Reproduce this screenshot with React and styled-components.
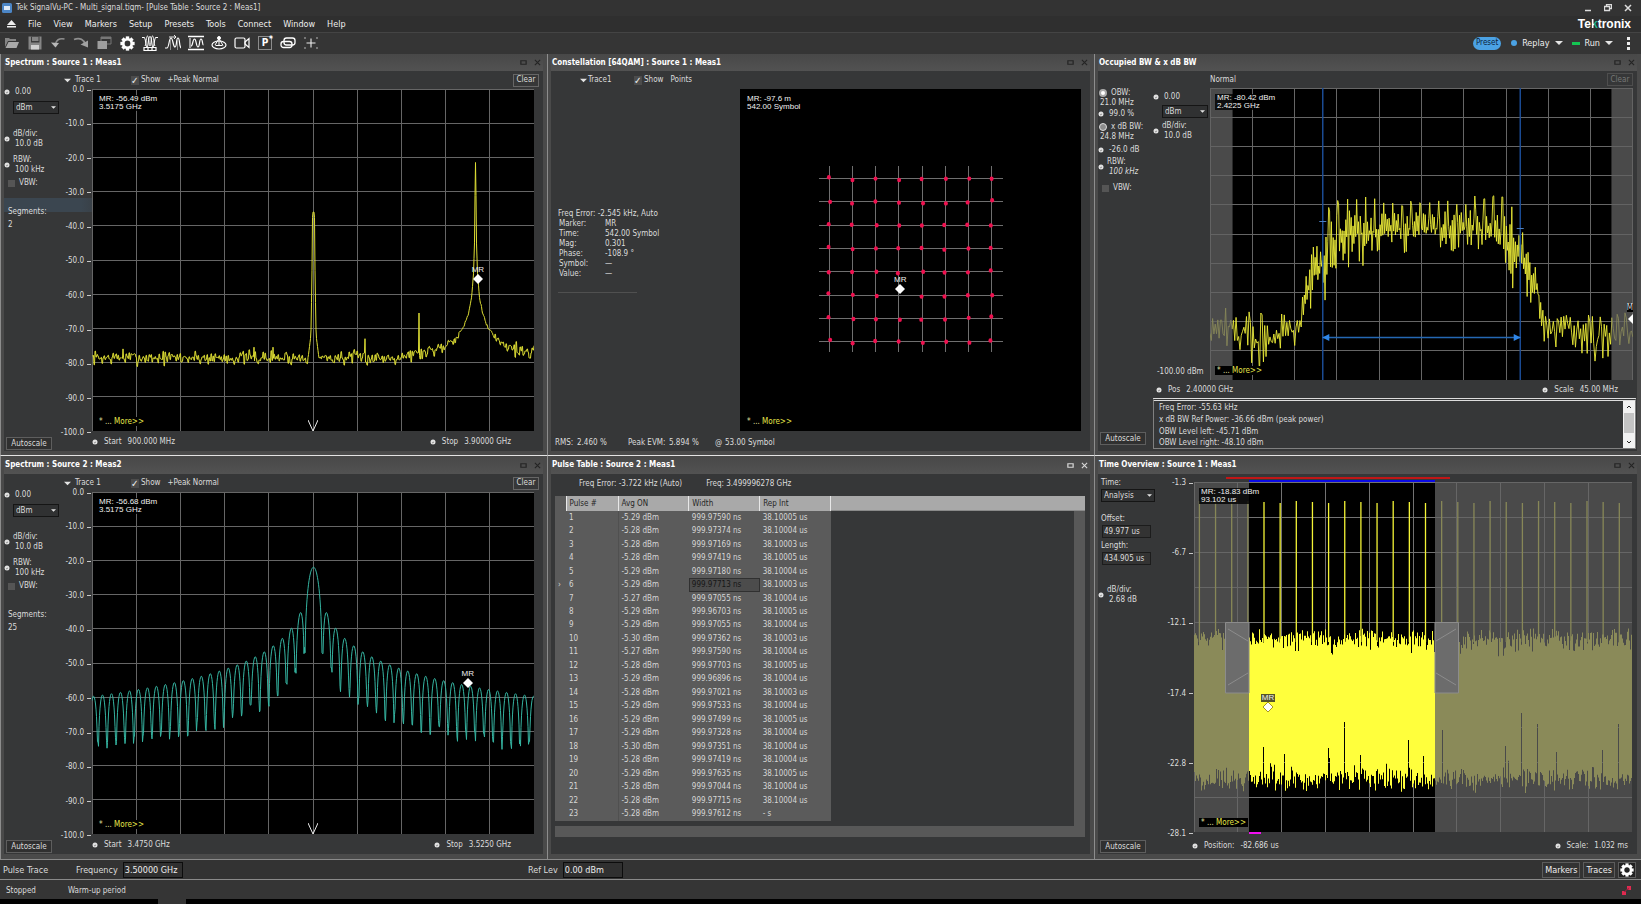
import React from 'react'
import styled, { createGlobalStyle } from 'styled-components'

const MENU = ['File', 'View', 'Markers', 'Setup', 'Presets', 'Tools', 'Connect', 'Window', 'Help']

const WIDTHS = [
    '97590', '97374', '97169', '97419', '97180', '97713', '97055', '96703', '97055', '97362', '97590', '97703',
    '96896', '97021', '97533', '97499', '97328', '97351', '97419', '97635', '97044', '97715', '97612',
]
const POWERS = [
    '29', '28', '28', '28', '29', '29', '27', '29', '29', '30', '27', '28',
    '29', '28', '29', '29', '29', '30', '28', '29', '28', '28', '28',
]
const INTERVALS = '54354345434543454445440'

const PULSES = WIDTHS.map((w, i) => ({
    id: i + 1,
    power: `-5.${POWERS[i]} dBm`,
    width: `999.${w} ns`,
    rep: i === 22 ? '- s' : `38.1000${INTERVALS[i]} us`,
}))

/* ---------- trace data ---------- */

const random = (seed) => {
    let s = seed
    return () => {
        s = (s * 1664525 + 1013904223) % 4294967296
        return s / 4294967296
    }
}

const toPath = (points) => 'M' + points.map(([x, y]) => `${x.toFixed(1)} ${y.toFixed(1)}`).join('L')

const lerp = (table, x) => {
    if (x <= table[0][0]) return table[0].slice(1)
    for (let i = 1; i < table.length; i++) {
        if (x <= table[i][0]) {
            const a = table[i - 1]
            const b = table[i]
            const t = (x - a[0]) / (b[0] - a[0])
            return a.slice(1).map((v, k) => v + (b[k + 1] - v) * t)
        }
    }
    return table[table.length - 1].slice(1)
}

const CW_SKIRT = [
    [0, -21.5], [0.6, -33], [1, -45], [2, -54], [4, -61], [7, -65.5], [12, -69.8], [19, -72.6],
    [33, -75.3], [54, -77.3], [90, -78.6],
]
const SPURS = { 162: -75.5, 181: -75.5, 273: -73, 327: -65.5, 31: -76 }

const cwTrace = () => {
    const rnd = random(7)
    const points = []
    let noise = 0
    for (let x = 0; x <= 442; x += 0.5) {
        if (x % 1 === 0) noise = (rnd() + rnd() + rnd() - 1.5) * 2
        let db = lerp(CW_SKIRT, Math.abs(x - 383.5))[0]
        db += noise * Math.min(1, Math.abs(x - 383.5) / 30)
        const d = Math.abs(x - 221.5)
        if (d <= 0.5) db = -36
        else if (d <= 1) db = -37.5
        else if (d < 6) db = Math.max(db, lerp([[1, -38], [1.6, -56], [2.6, -72], [6, -80]], d)[0])
        if (SPURS[x]) db = SPURS[x]
        points.push([x, -db * 3.42])
    }
    return toPath(points)
}

const pulseTrace = () => {
    const rnd = random(21)
    const points = []
    for (let x = 0; x <= 442; x += 0.5) {
        const u = Math.abs((x - 221.5) / 8.98) + 0.0001
        const env = -22 - 20 * Math.log10(Math.max(1, Math.PI * u))
        const sinc = -22 + 20 * Math.log10(Math.abs(Math.sin(Math.PI * u) / (Math.PI * u)) + 0.00001)
        const db = Math.max(sinc, env - 13 - rnd() * 4)
        points.push([x, -db * 3.42])
    }
    return toPath(points)
}

const OBW_ENVELOPE = [
    [0, 218, 272], [20, 212, 265], [40, 214, 278], [64, 220, 280], [84, 222, 262], [92, 205, 250], [96, 172, 242],
    [104, 148, 226], [112, 134, 216], [122, 120, 210], [132, 116, 182], [150, 116, 174], [200, 120, 162],
    [250, 118, 164], [276, 114, 172], [290, 116, 190], [300, 120, 214], [310, 130, 208], [318, 146, 216],
    [326, 172, 228], [331, 210, 240], [334, 220, 275], [360, 216, 262], [390, 216, 280], [422, 218, 270],
]

const obwTrace = () => {
    const rnd = random(12)
    const points = []
    let up = false
    for (let x = 0; x <= 422; ) {
        const [top, bottom] = lerp(OBW_ENVELOPE, x)
        const mid = (top + bottom) / 2
        const inBand = x > 92 && x < 330
        up = inBand || rnd() > 0.25 ? !up : up
        let y = up ? mid - rnd() * (mid - top) * 0.8 : mid + rnd() * rnd() * (bottom - mid) * 1.3
        if (x > 118 && x < 302 && x % 9.1 < 1.2) y = top - 8 + rnd() * 8
        points.push([x, y])
        x += inBand ? 0.9 : 1.3
    }
    return toPath(points)
}

// one bar for each pixel column, so that the edges stay ragged
const BLOCK_SPIKES = { 69: 265, 90: 272, 134: 266, 150: 240, 166: 273, 214: 258, 229: 274, 248: 248, 311: 264, 327: 231, 343: 242, 362: 270, 408: 268, 424: 242 }

const noiseBlock = () => {
    const rnd = random(5)
    const top = []
    const bottom = []
    for (let x = 0; x < 438; x += 1) {
        const t = 146 + rnd() * 10 + rnd() * rnd() * 24
        const b = BLOCK_SPIKES[x] || 312 - rnd() * 14 - rnd() * 14 - (rnd() > 0.9 ? rnd() * 14 : 0)
        top.push([x, t], [x + 1, t])
        bottom.push([x, b], [x + 1, b])
    }
    return toPath(top.concat(bottom.reverse())) + 'Z'
}

const symbols = () => {
    const rnd = random(33)
    const out = []
    for (let r = 0; r < 8; r++) {
        for (let c = 0; c < 8; c++) {
            if (r === 5 && c === 3) continue
            const x = 89.5 + c * 23.15 + (rnd() - 0.5) * 2.4
            const y = 89.3 + r * 23.3 + (rnd() - 0.5) * 2.4 + (c === 0 || c === 7 ? -0.5 : 0.8)
            out.push([x, y])
        }
    }
    return out
}

const CW = cwTrace()
const SINC = pulseTrace()
const OBW = obwTrace()
const BLOCK = noiseBlock()
const SYMBOLS = symbols()

const PlotSvg = ({ w, h, children }) => (
    <Canvas viewBox={`0 0 ${w} ${h}`} preserveAspectRatio="none" aria-hidden="true">
        {children}
    </Canvas>
)

const Grid = ({ w, h, cols = 10, rows = 10, color = '#666' }) => (
    <g stroke={color} strokeWidth="1" shapeRendering="crispEdges">
        {Array.from({ length: cols + 1 }, (_, i) => (
            <line key={`c${i}`} x1={(i * w) / cols} x2={(i * w) / cols} y1="0" y2={h} />
        ))}
        {Array.from({ length: rows + 1 }, (_, i) => (
            <line key={`r${i}`} y1={(i * h) / rows} y2={(i * h) / rows} x1="0" x2={w} />
        ))}
    </g>
)

/* ---------- icons ---------- */

const Gear = ({ size = 15 }) => (
    <svg width={size} height={size} viewBox="0 0 16 16">
        <g fill="#fff">
            {[0, 45, 90, 135, 180, 225, 270, 315].map((a) => (
                <rect key={a} x="6.2" y="0.4" width="3.6" height="4" transform={`rotate(${a} 8 8)`} />
            ))}
        </g>
        <circle cx="8" cy="8" r="4.5" fill="none" stroke="#fff" strokeWidth="2.8" />
    </svg>
)

const TOOLS = [
    ['Open', <g fill="#a9a9a9"><path d="M1 3h4l1 1h6v2H4l-3 6z" fill="#858585" /><path d="M4.500 7H15l-2.500 6H1.500z" /></g>],
    ['Save', <g><path d="M1.500 1.500h13v13h-13z" fill="#858585" /><path d="M4 1.500h8.500v6H4z" fill="#3c3c3c" /><path d="M5 3h6.500M5 5h6.500" stroke="#ccc" strokeWidth="1.200" /><path d="M4 10h8v4.500H4z" fill="#d0d0d0" /></g>],
    ['Undo', <g><path d="M14.500 4C9 3 6 5 5.200 10" fill="none" stroke="#8f8f8f" strokeWidth="1.500" /><path d="M1 7.500l4.500 5 3.500-4.500z" fill="#b8b8b8" /></g>],
    ['Redo', <g><path d="M1 4.500C7 2 11 5 12 9" fill="none" stroke="#8f8f8f" strokeWidth="1.800" /><path d="M7.500 9.500l7.500 3V5.500z" fill="#a2a2a2" /></g>],
    ['Windows', <g><path d="M5 2h10v7H5z" fill="none" stroke="#777" /><path d="M5 2h10v2H5z" fill="#777" /><path d="M1.500 6h9.500v8H1.500z" fill="#9d9d9d" /></g>],
    ['Settings', null],
    ['Displays', <g fill="none" stroke="#fff"><path d="M0 2.500h2c2 0 1.500 9.500 3 9.500S6 1.500 8 1.500 9.500 12 11 12s1-9.500 3-9.500h2" strokeWidth="1.100" /><path d="M3 11C4.500 9 4 1 5.500 1S7 11 8 11s1-10 2.500-10 1 8 2.500 10" strokeWidth=".9" /><path d="M2 12.500h12v3H2zM6 12v3M10 12v3" strokeWidth="1.200" /></g>],
    ['Trigger', <g fill="none" stroke="#fff"><path d="M0 13h2C4 13 4 3 6 3s2 9 4 9 1-9 3-9 1 8 3 10" strokeWidth="1.200" /><path d="M4 2h7M9 0l2 2-2 2" strokeWidth=".9" /><path d="M5.500 4v11M12.500 4v11" stroke="#999" strokeWidth=".9" /></g>],
    ['Amplitude', <g fill="none" stroke="#fff"><path d="M0 1.500h16M0 14.500h16" strokeWidth="1.400" /><path d="M2 3v10" /><path d="M3 11C5 11 4.500 4 6.500 4s1.500 8 3.500 8 1-8 3-8 1 6 2.500 6" strokeWidth="1.200" /></g>],
    ['Acquire', <g fill="none" stroke="#fff"><ellipse cx="8" cy="10" rx="7" ry="4" strokeWidth="1.200" /><path d="M4 10l4-6.500 4 7M8 3v8M4.500 10.500h7" /><circle cx="8" cy="3" r="1.500" fill="#fff" /></g>],
    ['Record', <g fill="none" stroke="#fff" strokeWidth="1.200"><rect x="1" y="3" width="10" height="10" rx="1.500" /><path d="M11 7l4-3.500v9L11 9z" /></g>],
    ['Preset options', null],
    ['Chain', <g fill="none" stroke="#fff" strokeWidth="1.300"><rect x="4" y="3" width="11" height="7" rx="2.500" /><rect x="1" y="6.500" width="11" height="6" rx="2.500" /></g>],
    ['Marker', <g fill="none" stroke="#eee" strokeWidth="1.100"><path d="M8 3.500v9M3.500 8h9" /><path d="M2 2v2M2 12v2M14 2v2M14 12v2" stroke="#aaa" /></g>],
]

const Knob = () => (
    <KnobSvg viewBox="0 0 6 6">
        <circle cx="3" cy="3" r="2.5" fill="#e2e2e2" />
        <path d="M2 4L4 3" stroke="#777" strokeWidth=".8" />
    </KnobSvg>
)

const Down = ({ color = '#e4e4e4', size = 8 }) => (
    <svg width={size} height={size} viewBox="0 0 8 8" aria-hidden="true"><path d="M0 2h8L4 6z" fill={color} /></svg>
)

/* ---------- shared parts ---------- */

const Panel = ({ title, active, second, children }) => (
    <PanelBox $second={second}>
        <PanelTitle $second={second}>
            <h2>{title}</h2>
            <TitleButton $active={active} aria-label={`Float ${title}`}>
                <svg width="7" height="7" viewBox="0 0 8 8"><path d="M1 2h6v4H1z" fill="none" stroke="currentColor" strokeWidth="1.4" /></svg>
            </TitleButton>
            <TitleButton $active={active} aria-label={`Close ${title}`}>
                <svg width="7" height="7" viewBox="0 0 8 8"><path d="M1 1l6 6M7 1L1 7" stroke="currentColor" strokeWidth="1.3" /></svg>
            </TitleButton>
        </PanelTitle>
        {children}
    </PanelBox>
)

const Unit = ({ label, value = 'dBm', width = 46 }) => (
    <SelectWrap $width={width}>
        <select aria-label={label} defaultValue={value}><option>{value}</option></select>
        <Down size={5} />
    </SelectWrap>
)

const Param = ({ top, label, value, italic }) => (
    <ParamRow $top={top}>
        <Knob />
        <ParamText $italic={italic}>
            {label && <span>{label}</span>}
            <b>{value}</b>
        </ParamText>
    </ParamRow>
)

const Axis = ({ labels, width }) => (
    <AxisBox $width={width}>
        {labels.map((l) => <span key={l}>{l}</span>)}
    </AxisBox>
)

const Marker = ({ x, y, boxed }) => (
    <MarkerBox $x={x} $y={y} $boxed={boxed}>
        <span>MR</span>
        <svg width="10" height="10" viewBox="0 0 10 10">
            <path d="M5 0l5 5-5 5-5-5z" fill="#fff" stroke={boxed ? '#a89a20' : 'none'} />
        </svg>
    </MarkerBox>
)

const Readout = ({ lines }) => (
    <ReadoutBox>{lines.map((l) => <div key={l}>{l}</div>)}</ReadoutBox>
)

const More = () => <MoreLink href="#more"><i>* ... </i>More&gt;&gt;</MoreLink>

const Field = ({ label, value }) => (
    <Footed><Knob /><span>{label}</span><span>{value}</span></Footed>
)

const Spectrum = ({ title, second, readout, segments, start, stop, trace, color, marker, glow }) => (
    <Panel title={title} second={second}>
        <Body $glow={glow}>
            <Side $width={56}>
                <Param top={16} value="0.00" />
                <Indent $top={4}><Unit label={`${title} unit`} /></Indent>
                <Param top={15} label="dB/div:" value="10.0 dB" />
                <Param top={6} label="RBW:" value="100 kHz" />
                <Check $top={3}><input type="checkbox" /> VBW:</Check>
                <Line $top={19} $left={4}>Segments:</Line>
                <Line $top={3} $left={4}>{segments}</Line>
                <Autoscale>Autoscale</Autoscale>
            </Side>
            <Main>
                <TraceBar $height={18}>
                    <TraceButton><Down size={7} />Trace 1</TraceButton>
                    <ShowLabel><input type="checkbox" defaultChecked /> Show</ShowLabel>
                    <span>+Peak Normal</span>
                    <Clear>Clear</Clear>
                </TraceBar>
                <PlotRow $right={9}>
                    <Axis width={32} labels={['0.0', '-10.0', '-20.0', '-30.0', '-40.0', '-50.0', '-60.0', '-70.0', '-80.0', '-90.0', '-100.0']} />
                    <Plot>
                        <PlotSvg w={442} h={342}>
                            <Grid w={442} h={342} />
                            <path d={trace} fill="none" stroke={color} strokeWidth="1" />
                        </PlotSvg>
                        <Readout lines={readout} />
                        <More />
                        <Marker x={marker[0]} y={marker[1]} />
                        <CenterMark viewBox="0 0 10 11"><path d="M0 0l5 11 5-11" fill="none" stroke="#eee" /></CenterMark>
                    </Plot>
                </PlotRow>
                <PlotFoot $left={32} $right={32} $height={20}>
                    <Field label="Start" value={start} />
                    <Field label="Stop" value={stop} />
                </PlotFoot>
            </Main>
        </Body>
    </Panel>
)

const Constellation = () => (
    <Panel title="Constellation [64QAM] : Source 1 : Meas1">
        <Body>
            <Main>
                <TraceBar $left={29} $height={18}>
                    <TraceButton $tight><Down size={7} />Trace1</TraceButton>
                    <ShowLabel><input type="checkbox" defaultChecked /> Show</ShowLabel>
                    <span>Points</span>
                </TraceBar>
                <PlotRow $right={9}>
                    <Info>
                        <p>Freq Error: -2.545 kHz, Auto</p>
                        <dl>
                            <dt>Marker:</dt><dd>MR</dd>
                            <dt>Time:</dt><dd>542.00 Symbol</dd>
                            <dt>Mag:</dt><dd>0.301</dd>
                            <dt>Phase:</dt><dd>-108.9 °</dd>
                            <dt>Symbol:</dt><dd>—</dd>
                            <dt>Value:</dt><dd>—</dd>
                        </dl>
                        <hr />
                    </Info>
                    <Plot>
                        <PlotSvg w={341} h={342}>
                            <g stroke="#6f6f6f" shapeRendering="crispEdges">
                                {[0, 1, 2, 3, 4, 5, 6, 7].map((i) => (
                                    <React.Fragment key={i}>
                                        <line x1={89.5 + i * 23.15} x2={89.5 + i * 23.15} y1="77" y2="263" />
                                        <line y1={89.5 + i * 23.3} y2={89.5 + i * 23.3} x1="79" x2="263" />
                                    </React.Fragment>
                                ))}
                            </g>
                            <g fill="#f0104f">
                                {SYMBOLS.map(([x, y], i) => <ellipse key={i} cx={x} cy={y} rx="2" ry="2.2" />)}
                            </g>
                        </PlotSvg>
                        <Readout lines={['MR: -97.6 m', '542.00 Symbol']} />
                        <More />
                        <Marker x={47} y={58.5} />
                    </Plot>
                </PlotRow>
                <Stats>
                    <span>RMS:</span><span>2.460 %</span>
                    <span>Peak EVM:</span><span>5.894 %</span>
                    <span>@</span><span>53.00 Symbol</span>
                </Stats>
            </Main>
        </Body>
    </Panel>
)

const OccupiedBW = () => (
    <Panel title="Occupied BW & x dB BW">
        <Body>
            <Side $width={55}>
                <Radio $top={17}><input type="radio" name="bw" defaultChecked /> OBW:</Radio>
                <Line $left={2}>21.0 MHz</Line>
                <Param top={1} value="99.0 %" />
                <Radio $top={3}><input type="radio" name="bw" /> x dB BW:</Radio>
                <Line $left={2}>24.8 MHz</Line>
                <Param top={3} value="-26.0 dB" />
                <Param top={2} label="RBW:" value="100 kHz" italic />
                <Check $top={6}><input type="checkbox" /> VBW:</Check>
                <Autoscale $lift={6}>Autoscale</Autoscale>
            </Side>
            <Main>
                <TraceBar $left={57}>
                    <span>Normal</span>
                    <Clear disabled>Clear</Clear>
                </TraceBar>
                <PlotRow $right={4}>
                    <Side $width={57}>
                        <Param top={4} value="0.00" />
                        <Indent $top={3}><Unit label="Occupied BW unit" /></Indent>
                        <Param top={3} label="dB/div:" value="10.0 dB" />
                        <FloorLabel>-100.00 dBm</FloorLabel>
                    </Side>
                    <Plot>
                        <PlotSvg w={422} h={292}>
                            <Grid w={422} h={292} />
                            <path d={OBW} fill="none" stroke="#ecec38" strokeWidth=".9" />
                            <g stroke="#1c4f9c" fill="#2f86e8">
                                <path d="M112.5 0v292M309.5 0v292" strokeWidth="1.4" />
                                <path d="M112.5 249.5h197" stroke="#2468b4" strokeWidth="1.4" />
                                <path d="M112 249.5l7-3.5v7zM310 249.5l-7-3.5v7z" stroke="none" />
                                <path d="M109 133.5h7M306 140.5h7" stroke="#4c7fc0" />
                            </g>
                            <rect width="22.5" height="292" fill="rgba(99,99,99,.75)" />
                            <rect x="400.5" width="21.5" height="292" fill="rgba(99,99,99,.75)" />
                            <path d="M422 226l-5 5 5 5z" fill="#fff" />
                        </PlotSvg>
                        <Readout lines={['MR: -80.42 dBm', '2.4225 GHz']} />
                        <More />
                        <EdgeMark>M</EdgeMark>
                    </Plot>
                </PlotRow>
                <PlotFoot $left={3} $right={19} $height={18}>
                    <Field label="Pos" value="2.40000 GHz" />
                    <Field label="Scale" value="45.00 MHz" />
                </PlotFoot>
                <Results>
                    <ul>
                        <li>Freq Error: -55.63 kHz</li>
                        <li>x dB BW Ref Power: -36.66 dBm (peak power)</li>
                        <li>OBW Level left: -45.71 dBm</li>
                        <li>OBW Level right: -48.10 dBm</li>
                    </ul>
                    <Scroller>
                        <button aria-label="Scroll up"><svg width="6" height="6" viewBox="0 0 6 6"><path d="M1 4l2-2 2 2" fill="none" stroke="#222" /></svg></button>
                        <i />
                        <button aria-label="Scroll down"><svg width="6" height="6" viewBox="0 0 6 6"><path d="M1 2l2 2 2-2" fill="none" stroke="#222" /></svg></button>
                    </Scroller>
                </Results>
            </Main>
        </Body>
    </Panel>
)

const PulseTable = () => (
    <Panel title="Pulse Table : Source 2 : Meas1" second active>
        <Body>
            <Main>
                <TableInfo>
                    <span>Freq Error: -3.722 kHz (Auto)</span>
                    <span>Freq: 3.499996278 GHz</span>
                </TableInfo>
                <TableArea>
                    <HeadFill />
                    <Table>
                        <thead>
                            <tr><th /><th>Pulse #</th><th>Avg ON</th><th>Width</th><th>Rep Int</th></tr>
                        </thead>
                        <tbody>
                            {PULSES.map((p) => (
                                <tr key={p.id}>
                                    <td>{p.id === 6 ? '›' : ''}</td>
                                    <td>{p.id}</td>
                                    <td>{p.power}</td>
                                    <Cell $selected={p.id === 6}>{p.width}</Cell>
                                    <td>{p.rep}</td>
                                </tr>
                            ))}
                        </tbody>
                    </Table>
                    <SideScroll />
                </TableArea>
                <BottomScroll />
            </Main>
        </Body>
    </Panel>
)

const TimeOverview = () => (
    <Panel title="Time Overview : Source 1 : Meas1" second>
        <Body>
            <Side $width={58}>
                <Line as="label" htmlFor="time-mode" $top={4} $left={3}>Time:</Line>
                <Indent $top={1} $left={3}>
                    <SelectWrap $width={54}>
                        <select id="time-mode" defaultValue="Analysis"><option>Analysis</option></select>
                        <Down size={5} />
                    </SelectWrap>
                </Indent>
                <Line as="label" htmlFor="offset" $top={12} $left={3}>Offset:</Line>
                <TimeInput id="offset" defaultValue="49.977 us" />
                <Line as="label" htmlFor="length" $top={3} $left={3}>Length:</Line>
                <TimeInput id="length" defaultValue="434.905 us" />
                <Param top={20} label="dB/div:" value="2.68 dB" />
                <Autoscale>Autoscale</Autoscale>
            </Side>
            <Main>
                <PlotRow $top={8} $right={5}>
                    <Axis width={38} labels={['-1.3', '-6.7', '-12.1', '-17.4', '-22.8', '-28.1']} />
                    <Plot>
                        <PlotSvg w={438} h={350}>
                            <Grid w={438} h={350} color="#727272" />
                            <g stroke="#f4f436" strokeWidth="1.3">
                                {Array.from({ length: 27 }, (_, i) => (
                                    <line key={i} x1={5.4 + i * 16.15} x2={5.4 + i * 16.15} y1={19 + (i % 3)} y2="160" />
                                ))}
                            </g>
                            <path d={BLOCK} fill="#ffff3c" />
                            <rect width="55" height="350" fill="rgba(99,99,99,.75)" />
                            <rect x="241" width="197" height="350" fill="rgba(99,99,99,.75)" />
                            <g fill="#6c6c6c" stroke="#8c8c8c">
                                <path d="M31.5 140.5H55V211H31.500zM241 140.5h23.5V211H241z" />
                                <path d="M34 147l20 12M34 203l20-12M262 147l-20 12M262 203l-20-12" />
                            </g>
                        </PlotSvg>
                        <RangeBar $left={7.2} $width={51.2} $top={-5} $color="#c01616" />
                        <RangeBar $left={12.5} $width={42.5} $top={-2} $color="#0a0ae6" />
                        <RangeBar $left={12.5} $width={2.8} $top={350} $color="#f010f0" />
                        <Readout lines={['MR: -18.83 dBm', '93.102 us']} />
                        <More />
                        <Marker x={16.9} y={64.4} boxed />
                    </Plot>
                </PlotRow>
                <PlotFoot $left={36} $right={9} $height={22} $drop={5}>
                    <Field label="Position:" value="-82.686 us" />
                    <Field label="Scale:" value="1.032 ms" />
                </PlotFoot>
            </Main>
        </Body>
    </Panel>
)

const App = () => (
    <Page>
        <Global />
        <TitleBar>
            <svg width="10" height="10" viewBox="0 0 10 10"><rect width="10" height="10" rx="1.5" fill="#4c86c6" /><path d="M2 3h6v4H2z" fill="#dfeaf6" /></svg>
            <h1>Tek SignalVu-PC - Multi_signal.tiqm- [Pulse Table : Source 2 : Meas1]</h1>
            <WindowButtons>
                <button aria-label="Minimize"><svg width="8" height="8" viewBox="0 0 8 8"><path d="M1 6.5h6" stroke="#ddd" strokeWidth="1.5" /></svg></button>
                <button aria-label="Restore"><svg width="8" height="8" viewBox="0 0 8 8"><path d="M2.5 2.500v-2h5v4h-2M.5 2.500h5v4h-5z" fill="none" stroke="#ddd" strokeWidth="1.3" /></svg></button>
                <button aria-label="Close"><svg width="8" height="8" viewBox="0 0 8 8"><path d="M1 1l6 6M7 1L1 7" stroke="#ddd" strokeWidth="1.5" /></svg></button>
            </WindowButtons>
        </TitleBar>
        <MenuBar>
            <svg width="9" height="8" viewBox="0 0 9 8"><path d="M4.5 0L9 5H0zM0 6h9v1.500H0z" fill="#eee" /></svg>
            {MENU.map((m) => <button key={m}>{m}</button>)}
            <Brand>Te<em>k</em>tronix</Brand>
        </MenuBar>
        <ToolBar>
            {TOOLS.map(([name, art]) => (
                <ToolButton key={name} aria-label={name}>
                    {name === 'Settings' && <Gear />}
                    {name === 'Preset options' && <PresetBox>P<sup>*</sup></PresetBox>}
                    {art && <svg width="16" height="16" viewBox="0 0 16 16">{art}</svg>}
                </ToolButton>
            ))}
            <RunGroup>
                <Preset>Preset</Preset>
                <RunButton><Dot />Replay<Down size={8} /></RunButton>
                <RunButton $last><Dash />Run<Down size={8} /></RunButton>
                <Dots aria-label="More options"><i /><i /><i /></Dots>
            </RunGroup>
        </ToolBar>
        <Panels>
            <Spectrum
                title="Spectrum : Source 1 : Meas1"
                readout={['MR: -56.49 dBm', '3.5175 GHz']}
                segments="2"
                start="900.000 MHz"
                stop="3.90000 GHz"
                trace={CW}
                color="#dede34"
                marker={[87.3, 55.5]}
                glow
            />
            <Constellation />
            <OccupiedBW />
            <Spectrum
                title="Spectrum : Source 2 : Meas2"
                second
                readout={['MR: -56.68 dBm', '3.5175 GHz']}
                segments="25"
                start="3.4750 GHz"
                stop="3.5250 GHz"
                trace={SINC}
                color="#35b5a2"
                marker={[85, 55.9]}
            />
            <PulseTable />
            <TimeOverview />
        </Panels>
        <BottomBar>
            <TraceName>Pulse Trace</TraceName>
            <BarLabel $width={452}>Frequency <input defaultValue="3.50000 GHz" /></BarLabel>
            <BarLabel>Ref Lev <input defaultValue="0.00 dBm" /></BarLabel>
            <BarButtons>
                <button>Markers</button>
                <button>Traces</button>
                <button aria-label="Settings"><Gear size={14} /></button>
            </BarButtons>
        </BottomBar>
        <StatusBar>
            <span>Stopped</span>
            <span>Warm-up period</span>
            <svg width="9" height="9" viewBox="0 0 9 9"><path d="M5 0h4v4H7L5 3zM0 5h3l1 1v3H0z" fill="#e02a50" /><path d="M2 6l5-4" stroke="#a02040" /></svg>
        </StatusBar>
        <TaskStrip />
    </Page>
)

export default App

const Global = createGlobalStyle`
* {
    box-sizing: border-box;
}
body {
    margin: 0;
    background: #353535;
}
body, button, input, select {
    font-family: "DejaVu Sans Condensed", "DejaVu Sans", Tahoma, sans-serif;
    font-size: 8px;
    line-height: 10px;
    color: #dcdcdc;
}
button {
    background: none;
    border: 0;
    padding: 0;
    cursor: pointer;
}
h1, h2, p, dl, dd, ul {
    margin: 0;
    padding: 0;
    list-style: none;
}
svg {
    display: block;
    flex: none;
}
`
const Page = styled.div`
display: flex;
flex-direction: column;
min-height: 100vh;
`
const TitleBar = styled.header`
display: flex;
align-items: center;
height: 16px;
padding: 0 9px 0 2px;
gap: 4px;
background: #333;
h1 {
    font-size: 8px;
    font-weight: normal;
}
`
const WindowButtons = styled.div`
display: flex;
gap: 12px;
margin-left: auto;
`
const MenuBar = styled.nav`
display: flex;
align-items: center;
height: 17px;
padding: 0 10px 0 7px;
gap: 12px;
background: #2f2f2f;
border-bottom: 1px solid #444;
button {
    font-size: 9px;
    color: #eee;
}
`
const Brand = styled.strong`
margin-left: auto;
font-family: "Liberation Sans", Arial, sans-serif;
font-size: 12px;
line-height: 16px;
color: #fff;
em {
    font-style: normal;
    color: transparent;
    background: linear-gradient(90deg, #fff 45%, #1fb98a 45%);
    background-clip: text;
}
`
const ToolBar = styled.div`
display: flex;
align-items: center;
height: 21px;
padding: 0 8px 1px 4px;
gap: 7px;
background: #353535;
`
const ToolButton = styled.button`
display: grid;
place-items: center;
width: 16px;
height: 18px;
`
const PresetBox = styled.span`
display: block;
width: 14px;
height: 14px;
border: 1px solid #8c8c8c;
font-size: 10px;
line-height: 12px;
font-weight: bold;
color: #fff;
position: relative;
sup {
    position: absolute;
    top: -3px;
    right: -2px;
    line-height: 10px;
}
`
const RunGroup = styled.div`
display: flex;
align-items: center;
margin-left: auto;
`
const Preset = styled.button`
width: 28px;
height: 13px;
border-radius: 7px;
margin-right: 10px;
background: #4ba2e4;
color: #0c2440;
`
const RunButton = styled.button`
display: flex;
align-items: center;
gap: 5px;
margin-right: ${({ $last }) => ($last ? 14 : 9)}px;
font-size: 9px;
color: #eee;
`
const Dot = styled.i`
width: 6px;
height: 6px;
border-radius: 3px;
background: #4ba2e4;
`
const Dash = styled.i`
width: 8px;
height: 3px;
background: #14c552;
`
const Dots = styled.button`
display: flex;
flex-direction: column;
gap: 2px;
width: 6px;
i {
    width: 3px;
    height: 3px;
    background: #eee;
}
`
const Panels = styled.main`
display: grid;
flex: 1;
grid-template-columns: repeat(3, minmax(0, 1fr));
grid-template-rows: 401fr 404fr;
`
const PanelBox = styled.section`
display: flex;
flex-direction: column;
min-width: 0;
padding: 0 4px ${({ $second }) => ($second ? 5 : 4)}px 3px;
background: #4a4a4a;
border-left: 1px solid #8d8d8d;
border-top: ${({ $second }) => ($second ? '1px solid #e4e4e4' : '0')};
`
const PanelTitle = styled.div`
display: flex;
align-items: center;
height: ${({ $second }) => ($second ? 18 : 17)}px;
padding-right: 2px;
gap: 7px;
background: linear-gradient(#484848, #525252);
h2 {
    flex: 1;
    font-size: 8px;
    color: #fff;
    padding-left: 1px;
}
`
const TitleButton = styled.button`
color: ${({ $active }) => ($active ? '#d8d8d8' : '#242424')};
`
const Body = styled.div`
display: flex;
flex: 1;
min-height: 0;
background: #363738;
background-image: ${({ $glow }) => ($glow ? 'linear-gradient(90deg, #3b4650 70%, #363738)' : 'none')};
background-size: 110px 14px;
background-position: 0 127px;
background-repeat: no-repeat;
`
const Side = styled.div`
display: flex;
flex-direction: column;
align-items: flex-start;
flex: none;
width: ${({ $width }) => $width}px;
`
const Main = styled.div`
display: flex;
flex-direction: column;
flex: 1;
min-width: 0;
`
const ParamRow = styled.div`
display: flex;
align-items: center;
gap: 3px;
margin-top: ${({ $top }) => $top}px;
`
const KnobSvg = styled.svg`
width: 6px;
height: 6px;
`
const ParamText = styled.div`
display: flex;
flex-direction: column;
b {
    font-weight: normal;
    font-style: ${({ $italic }) => ($italic ? 'italic' : 'normal')};
    padding-left: 2px;
}
`
const Indent = styled.div`
margin-top: ${({ $top }) => $top}px;
margin-left: ${({ $left = 9 }) => $left}px;
`
const SelectWrap = styled.div`
position: relative;
width: ${({ $width }) => $width}px;
select {
    display: block;
    appearance: none;
    width: 100%;
    height: 13px;
    padding: 0 2px;
    border: 1px solid #151515;
    border-radius: 0;
    background: #303132;
}
svg {
    position: absolute;
    right: 3px;
    top: 4px;
}
`
const Check = styled.label`
display: flex;
align-items: center;
gap: 4px;
margin-top: ${({ $top }) => $top}px;
margin-left: 4px;
input {
    appearance: none;
    width: 7px;
    height: 7px;
    margin: 0;
    background: #555;
}
`
const Radio = styled.label`
display: flex;
align-items: center;
gap: 4px;
margin-top: ${({ $top }) => $top}px;
margin-left: 1px;
input {
    appearance: none;
    width: 8px;
    height: 8px;
    margin: 0;
    border-radius: 4px;
    border: 1px solid #ddd;
    background: #8c8c8c;
}
input:checked {
    border-width: 2px;
    background: #fff;
    border-color: #aaa;
}
`
const Line = styled.span`
display: block;
margin-top: ${({ $top = 0 }) => $top}px;
margin-left: ${({ $left }) => $left}px;
`
const Autoscale = styled.button`
width: 46px;
height: 13px;
margin: auto 0 ${({ $lift = 1 }) => $lift}px 2px;
border: 1px solid #5e5e5e;
background: #303030;
`
const TraceBar = styled.div`
display: flex;
align-items: center;
height: ${({ $height = 17 }) => $height}px;
padding: 0 4px 0 ${({ $left = 4 }) => $left}px;
gap: 7px;
`
const TraceButton = styled.button`
display: flex;
align-items: center;
gap: ${({ $tight }) => ($tight ? 1 : 4)}px;
width: ${({ $tight }) => ($tight ? 47 : 60)}px;
`
const ShowLabel = styled.label`
display: flex;
align-items: center;
gap: 2px;
input {
    appearance: none;
    width: 8px;
    height: 9px;
    margin: 0;
    background: #4c4c4c;
}
input:checked::after {
    content: "✓";
    display: block;
    font-size: 10px;
    line-height: 9px;
    font-weight: bold;
    color: #eee;
}
`
const Clear = styled.button`
width: 26px;
height: 13px;
margin-left: auto;
border: 1px solid #666;
color: #dcdcdc;
&:disabled {
    color: #777;
    border-color: #4e4e4e;
}
`
const PlotRow = styled.div`
display: flex;
flex: 1;
min-height: 0;
padding-top: ${({ $top = 0 }) => $top}px;
padding-right: ${({ $right }) => $right}px;
`
const AxisBox = styled.div`
display: flex;
flex-direction: column;
justify-content: space-between;
width: ${({ $width }) => $width}px;
margin: -4px 0 -7px;
span {
    display: flex;
    align-items: center;
    justify-content: flex-end;
    gap: 3px;
}
span::after {
    content: "";
    width: 4px;
    height: 1px;
    margin-right: 1px;
    background: #c8c8c8;
}
`
const Plot = styled.div`
position: relative;
flex: 1;
min-width: 0;
background: #000;
`
const Canvas = styled.svg`
position: absolute;
inset: 0;
width: 100%;
height: 100%;
`
const ReadoutBox = styled.div`
position: absolute;
left: 5px;
top: 6px;
padding: 0 2px;
font-family: "Liberation Sans", Arial, sans-serif;
line-height: 8px;
color: #f0f0f0;
background: rgba(0, 0, 0, 0.8);
`
const MoreLink = styled.a`
position: absolute;
left: 5px;
bottom: 5px;
padding: 0 2px;
line-height: 9px;
color: #e6e64a;
background: #000;
text-decoration: none;
i {
    font-style: normal;
    color: #e0e0a0;
}
`
const MarkerBox = styled.div`
position: absolute;
left: ${({ $x }) => $x}%;
top: ${({ $y }) => $y}%;
display: flex;
flex-direction: column;
align-items: center;
width: 14px;
margin: -13px 0 0 -7px;
span {
    line-height: 8px;
    padding: 0 1px;
    color: #eee;
    font-family: "Liberation Sans", Arial, sans-serif;
    background: ${({ $boxed }) => ($boxed ? '#55552a' : 'none')};
}
`
const CenterMark = styled.svg`
position: absolute;
left: 50%;
bottom: 0;
width: 10px;
height: 11px;
margin-left: -5px;
`
const EdgeMark = styled.span`
position: absolute;
right: 0;
top: 74%;
line-height: 8px;
background: #000;
`
const RangeBar = styled.i`
position: absolute;
left: ${({ $left }) => $left}%;
width: ${({ $width }) => $width}%;
top: ${({ $top }) => $top}px;
height: 2px;
background: ${({ $color }) => $color};
`
const PlotFoot = styled.div`
display: flex;
align-items: center;
justify-content: space-between;
height: ${({ $height }) => $height}px;
padding: ${({ $drop = 2 }) => $drop}px ${({ $right }) => $right}px 0 ${({ $left }) => $left}px;
`
const Footed = styled.div`
display: flex;
align-items: center;
gap: 6px;
`
const Info = styled.div`
width: 189px;
padding: 120px 0 0 7px;
dl {
    display: grid;
    grid-template-columns: 46px 1fr;
    padding-left: 1px;
}
hr {
    width: 79px;
    margin: 13px 0 0;
    border: 0;
    border-top: 1px solid #505050;
}
`
const Stats = styled.div`
display: grid;
grid-template-columns: 22px 51px 41px 46px 10px 1fr;
align-items: center;
height: 20px;
padding: 4px 0 0 4px;
`
const FloorLabel = styled.span`
margin: auto 0 3px 4px;
`
const Results = styled.div`
display: flex;
height: 51px;
margin: 0 1px 2px 0;
border: 1px solid #808080;
border-top: 3px double #ddd;
ul {
    flex: 1;
    padding: 1px 0 0 5px;
}
li {
    height: 11px;
    line-height: 11px;
}
li:nth-child(-n+2) {
    height: 12px;
    line-height: 12px;
}
`
const Scroller = styled.div`
display: flex;
flex-direction: column;
align-items: center;
width: 12px;
background: #f2f2f2;
button {
    display: grid;
    place-items: center;
    height: 12px;
    width: 12px;
}
i {
    width: 10px;
    height: 20px;
    margin-bottom: auto;
    background: #c4c4c4;
}
`
const TableInfo = styled.div`
display: flex;
align-items: center;
height: 22px;
gap: 24px;
padding: 0 28px 2px;
`
const TableArea = styled.div`
position: relative;
display: flex;
flex: 1;
min-height: 0;
margin: 0 5px 0 4px;
`
const HeadFill = styled.div`
position: absolute;
left: 11px;
right: 0;
top: 0;
height: 15px;
background: #a9a9a9;
border-bottom: 1px solid #8a8a8a;
`
const Table = styled.table`
position: relative;
width: 276px;
margin-bottom: 5px;
border-collapse: collapse;
table-layout: fixed;
background: #5b5b5b;
th {
    height: 15px;
    padding: 0 3px;
    font-weight: normal;
    text-align: left;
    color: #262626;
    background: #a9a9a9;
    border-right: 1px solid #e8e8e8;
}
th:nth-child(1) {
    width: 11px;
    background: #5b5b5b;
}
th:nth-child(2) {
    width: 52px;
}
td {
    padding: 0 3px;
    line-height: 10px;
    color: #d6d6d6;
}
td:nth-child(2) {
    border-right: 1px solid #505050;
}
`
const Cell = styled.td`
&& {
    color: ${({ $selected }) => ($selected ? '#161616' : '#d6d6d6')};
}
background: ${({ $selected }) => ($selected ? '#4c4c4c' : 'none')};
outline: ${({ $selected }) => ($selected ? '1px solid #303030' : 'none')};
outline-offset: -1px;
`
const SideScroll = styled.div`
width: 11px;
margin: 15px 0 0 auto;
background: #585858;
`
const BottomScroll = styled.div`
height: 11px;
margin: 0 5px 17px 4px;
background: #585858;
`
const TimeInput = styled.input`
width: 49px;
height: 13px;
margin: 1px 0 0 4px;
padding: 0 1px;
border: 1px solid #1c1c1c;
background: #333;
`
const BottomBar = styled.div`
display: flex;
align-items: center;
height: 21px;
padding: 0 5px 0 3px;
font-size: 9px;
background: #333;
border-top: 1px solid #8a8a8a;
border-bottom: 1px solid #8a8a8a;
input, button {
    font-size: 9px;
    color: #eee;
}
`
const TraceName = styled.span`
width: 73px;
`
const BarLabel = styled.label`
display: flex;
align-items: center;
gap: 5px;
width: ${({ $width }) => ($width ? `${$width}px` : 'auto')};
input {
    width: 60px;
    height: 16px;
    padding: 0 1px;
    border: 1px solid #0c0c0c;
    background: #303030;
}
`
const BarButtons = styled.div`
display: flex;
gap: 3px;
margin-left: auto;
button {
    height: 16px;
    padding: 0 2px;
    border: 1px solid #5c5c5c;
}
button:last-child {
    padding: 0 1px;
    background: #222;
}
`
const StatusBar = styled.footer`
display: flex;
align-items: center;
height: 19px;
padding: 2px 10px 0 6px;
gap: 32px;
background: #353535;
svg {
    margin-left: auto;
}
`
const TaskStrip = styled.div`
height: 5px;
background: linear-gradient(90deg, #000 158px, #353535 158px, #353535 186px, #000 186px);
`
